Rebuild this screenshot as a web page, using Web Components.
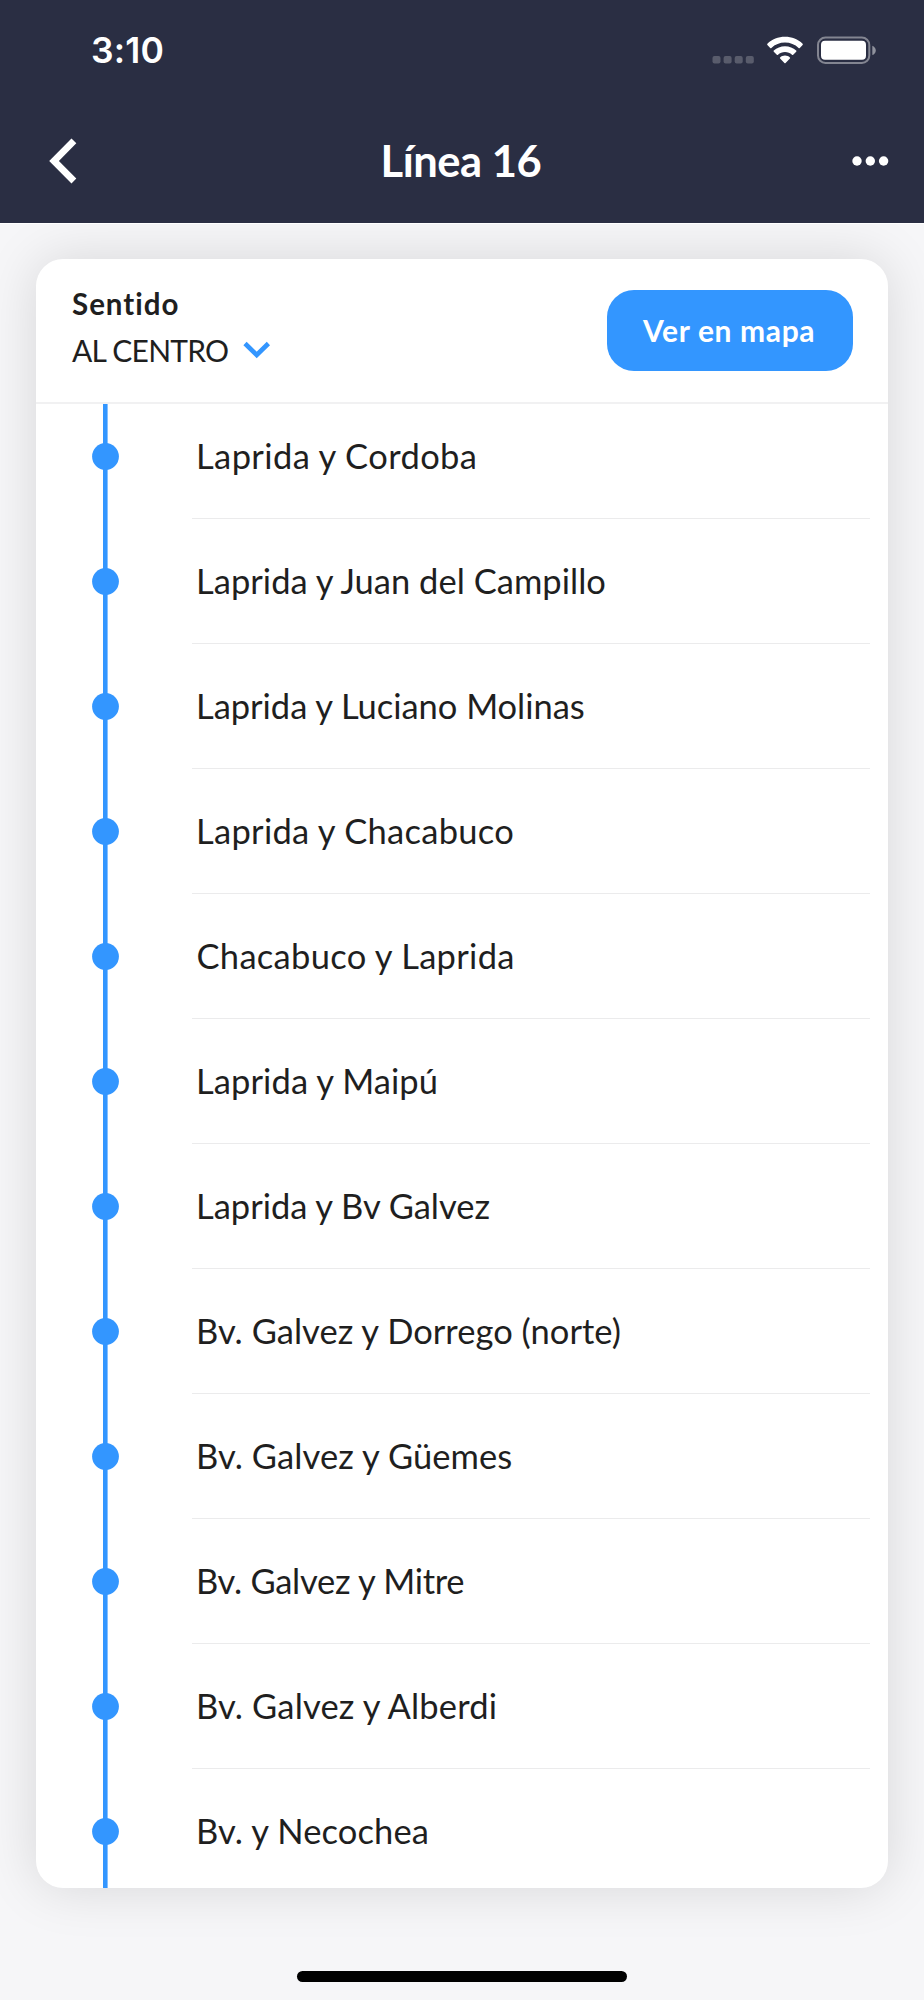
<!DOCTYPE html>
<html lang="es">
<head>
<meta charset="utf-8">
<title>Línea 16</title>
<style>
  html, body { margin: 0; height: 100%; background: #f6f6f8; }
  body { font-family: Lato, "Open Sans", sans-serif; color: #1f1f1f; overflow: hidden; }
</style>
</head>
<body>
<line-screen></line-screen>
<script>
const define = (name, html, ready) => {
  const template = document.createElement('template');
  template.innerHTML = html;
  customElements.define(name, class extends HTMLElement {
    connectedCallback() {
      if (this.shadowRoot) return;
      this.attachShadow({ mode: 'open' }).append(template.content.cloneNode(true));
      if (ready) ready(this, this.shadowRoot);
    }
  });
};

const ctx = document.createElement('canvas').getContext('2d');

/* A single line of text, tracked so that its ink spans the "span" attribute. */
define('tracked-text', `
  <style>:host { display: block; white-space: nowrap; } span { display: block; }</style>
  <span><slot></slot></span>`, (host, root) => {
  const text = host.textContent;
  const cs = getComputedStyle(host);
  ctx.font = `${cs.fontWeight} ${cs.fontSize} ${cs.fontFamily}`;
  const m = ctx.measureText(text);
  const ink = m.actualBoundingBoxRight + m.actualBoundingBoxLeft;
  const gap = (Number(host.getAttribute('span')) - ink) / (text.length - 1);
  const span = root.querySelector('span');
  span.style.letterSpacing = gap.toFixed(3) + 'px';
  span.style.marginLeft = m.actualBoundingBoxLeft.toFixed(2) + 'px';
});

define('status-bar', `
  <style>
    :host { display: flex; height: 101px; padding: 0 49px 0 92px; justify-content: space-between; align-items: flex-start; }
    .time { font: 600 35.5px/44px Inter, sans-serif; margin-top: 29px; }
    svg { display: block; margin-top: 34px; }
  </style>
  <tracked-text class="time" span="70.5">3:10</tracked-text>
  <svg width="164" height="34" viewBox="711 34 164 34" fill="#fff" overflow="visible">
    <g opacity=".22">
      <rect x="712.5" y="56" width="8" height="7.5" rx="2"/><rect x="723.6" y="56" width="8" height="7.5" rx="2"/>
      <rect x="734.7" y="56" width="8" height="7.5" rx="2"/><rect x="745.8" y="56" width="8" height="7.5" rx="2"/>
    </g>
    <path d="M785 36.8c6.8 0 13 2.6 17.6 6.9q.6.6 0 1.2l-2.8 3q-.6.5-1.2 0c-3.6-3.3-8.4-5.3-13.6-5.3s-10 2-13.6 5.3q-.6.5-1.2 0l-2.8-3q-.6-.6 0-1.2c4.600-4.300 10.800-6.900 17.600-6.900z"/>
    <path d="M785 46.200c4.300 0 8.200 1.600 11.200 4.300q.6.6 0 1.200l-3 3q-.6.5-1.200 0c-1.900-1.600-4.300-2.600-7-2.600s-5.100 1-7 2.600q-.6.5-1.200 0l-3-3q-.6-.6 0-1.200c3-2.700 6.900-4.300 11.200-4.300z"/>
    <path d="M785 55.600c1.900 0 3.600.7 4.900 1.800q.6.6 0 1.200l-4.300 4.400q-.6.5-1.200 0l-4.300-4.400q-.6-.6 0-1.200c1.300-1.100 3-1.800 4.900-1.800z"/>
    <rect x="818" y="37.500" width="51.300" height="25.500" rx="7.500" fill="none" stroke="#fff" stroke-width="2" opacity=".42"/>
    <rect x="821" y="40.800" width="45" height="19" rx="4"/>
    <path d="M872.300 45.700c2.100.9 3.500 2.600 3.500 4.700s-1.400 3.800-3.500 4.700z" opacity=".48"/>
  </svg>`);

define('title-bar', `
  <style>
    :host { display: grid; grid-template-columns: 1fr 157px 1fr; height: 120px; padding: 0 35px; align-items: center; }
    tracked-text { font: 700 43.5px/52px Lato, sans-serif; margin-top: -2px; }
    svg { display: block; }
    .back { margin-left: 14px; }
    .more { justify-self: end; }
  </style>
  <svg class="back" width="28" height="46" viewBox="49 138 28 46"><path d="M73.900 140.900L54 161l19.900 20" fill="none" stroke="#fff" stroke-width="6.800"/></svg>
  <tracked-text span="157">Línea 16</tracked-text>
  <svg class="more" width="37" height="10" viewBox="852 156 37 10" fill="#fff"><circle cx="857" cy="161" r="4.700"/><circle cx="870.300" cy="161" r="4.700"/><circle cx="883.600" cy="161" r="4.700"/></svg>`);

define('direction-picker', `
  <style>
    :host { display: block; }
    .label { font: 700 29.5px/40px Lato, sans-serif; }
    .value { display: flex; align-items: center; height: 47px; margin-top: 3px; }
    .value tracked-text { width: 171px; margin-top: -1px; font: 400 30px/47px Lato, sans-serif; }
    svg { display: block; margin-top: -1px; }
  </style>
  <tracked-text class="label" span="106">Sentido</tracked-text>
  <div class="value"><tracked-text span="157">AL CENTRO</tracked-text>
    <svg width="28" height="18" viewBox="243 341 28 18"><path d="M245 343.500L256.700 355l11.700-11.500" fill="none" stroke="#3396ff" stroke-width="4.600"/></svg>
  </div>`);

define('map-button', `
  <style>
    :host { display: block; box-sizing: border-box; width: 246px; height: 81px; padding: 0 35px; border-radius: 27px;
      background: #3396ff; color: #fff; font: 700 30px/80px Lato, sans-serif; }
  </style>
  <tracked-text span="172">Ver en mapa</tracked-text>`);

define('stop-row', `
  <style>
    :host { display: grid; grid-template-columns: 156px 1fr; height: 125px; flex: none; }
    .rail { display: grid; justify-items: center; align-items: center; width: 138px;
      background: linear-gradient(#3396ff, #3396ff) 50% 0 / 4.6px 100% no-repeat; }
    .rail svg { display: block; }
    .name { box-sizing: border-box; margin-right: 18px; border-bottom: 1px solid #ebebec; padding: 0 0 0 7px; font-size: 34.5px; line-height: 123px; }
    tracked-text { height: 124px; }
  </style>
  <div class="rail"><svg width="27" height="27"><circle cx="13.500" cy="13.500" r="13.400" fill="#3396ff"/></svg></div>
  <div class="name"></div>`, (host, root) => {
  const t = document.createElement('tracked-text');
  t.textContent = host.getAttribute('name');
  t.setAttribute('span', host.getAttribute('span'));
  /* Round capitals overhang the left edge a little. */
  if (/^C/.test(t.textContent)) t.style.marginLeft = '-1.5px';
  root.querySelector('.name').append(t);
});

define('stops-card', `
  <style>
    :host { display: flex; flex-direction: column; height: 1629px; border-radius: 27px; background: #fff;
      box-shadow: 0 0 54px rgba(0,0,0,.13); }
    header { box-sizing: border-box; display: flex; justify-content: space-between; height: 145px; flex: none;
      padding: 25px 35px 0 36px; border-bottom: 2px solid #f1f1f2; }
    map-button { margin-top: 6px; }
    .list { flex: 1; min-height: 0; overflow: hidden; display: flex; flex-direction: column; }
    ::slotted(stop-row:first-of-type) { margin-top: -10px; }
  </style>
  <header><direction-picker></direction-picker><map-button></map-button></header>
  <div class="list"><slot></slot></div>`);

define('home-indicator', `
  <style>:host { display: block; width: 330px; height: 11px; border-radius: 6px; background: #000; margin: 83px auto 0; }</style>`);

define('line-screen', `
  <style>
    :host { display: block; height: 2000px; overflow: hidden; }
    .top { background: #2a2e43; color: #fff; height: 223px; position: relative; z-index: 1; border-bottom: 1px solid #fff; }
    main { padding: 35px 36px 0; }
  </style>
  <div class="top"><status-bar></status-bar><title-bar></title-bar></div>
  <main><stops-card>
    <stop-row name="Laprida y Cordoba" span="277.5"></stop-row>
    <stop-row name="Laprida y Juan del Campillo" span="409"></stop-row>
    <stop-row name="Laprida y Luciano Molinas" span="386.5"></stop-row>
    <stop-row name="Laprida y Chacabuco" span="316"></stop-row>
    <stop-row name="Chacabuco y Laprida" span="316.5"></stop-row>
    <stop-row name="Laprida y Maipú" span="238.5"></stop-row>
    <stop-row name="Laprida y Bv Galvez" span="293"></stop-row>
    <stop-row name="Bv. Galvez y Dorrego (norte)" span="422.5"></stop-row>
    <stop-row name="Bv. Galvez y Güemes" span="314"></stop-row>
    <stop-row name="Bv. Galvez y Mitre" span="266"></stop-row>
    <stop-row name="Bv. Galvez y Alberdi" span="299.5"></stop-row>
    <stop-row name="Bv. y Necochea" span="229.5"></stop-row>
  </stops-card></main>
  <home-indicator></home-indicator>`);
</script>
</body>
</html>
